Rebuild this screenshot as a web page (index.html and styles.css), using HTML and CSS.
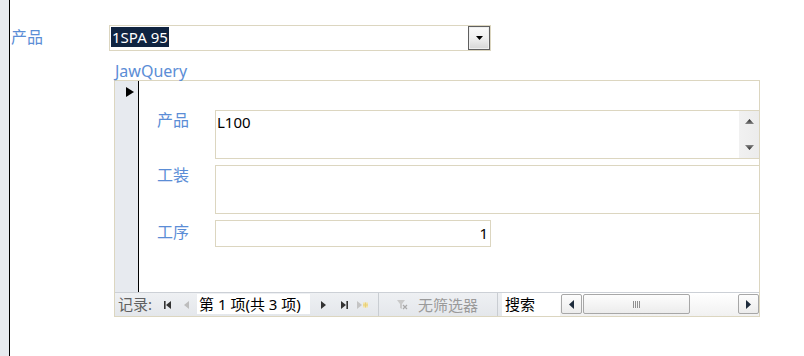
FILE: index.html
```html
<!DOCTYPE html>
<html lang="zh-CN">
<head>
<meta charset="utf-8">
<title>JawQuery</title>
<link rel="stylesheet" href="styles.css">
</head>
<body>
<div class="app">
  <aside class="strip"></aside>
  <main class="form">
    <div class="top-row">
      <span class="lbl">产品</span>
      <div class="combo">
        <span class="sel">1SPA 95</span>
        <span class="drop"><svg width="7" height="4" viewBox="0 0 7 4"><path d="M0 0H7L3.5 4Z" fill="#000"/></svg></span>
      </div>
    </div>
    <div class="caption">JawQuery</div>
    <div class="subform">
      <div class="sub-body">
        <div class="selector"><svg width="8" height="10" viewBox="0 0 8 10"><path d="M0 0L8 5L0 10Z" fill="#000"/></svg></div>
        <div class="detail">
          <div class="field">
            <span class="lbl">产品</span>
            <div class="tb tb1">
              <span class="tb-text">L100</span>
              <span class="vscroll">
                <svg width="9" height="5" viewBox="0 0 9 5"><defs><linearGradient id="ga" x1="0" y1="0" x2="0" y2="1"><stop offset="0" stop-color="#222"/><stop offset="1" stop-color="#888"/></linearGradient></defs><path d="M0 5L4.5 0L9 5Z" fill="url(#ga)"/></svg>
                <svg width="9" height="5" viewBox="0 0 9 5"><defs><linearGradient id="gb" x1="0" y1="0" x2="0" y2="1"><stop offset="0" stop-color="#888"/><stop offset="1" stop-color="#222"/></linearGradient></defs><path d="M0 0L9 0L4.5 5Z" fill="url(#gb)"/></svg>
              </span>
            </div>
          </div>
          <div class="field">
            <span class="lbl">工装</span>
            <div class="tb tb2"></div>
          </div>
          <div class="field">
            <span class="lbl lbl3">工序</span>
            <div class="tb tb3">1</div>
          </div>
        </div>
      </div>
      <div class="navbar">
        <span class="nav-label">记录:</span>
        <span class="nbtn w18"><svg width="7" height="8" viewBox="0 0 7 8"><rect x="0" y="0" width="1.6" height="8" fill="#333"/><path d="M7 0L2 4L7 8Z" fill="#333"/></svg></span>
        <span class="nbtn w21"><svg width="5" height="8" viewBox="0 0 5 8"><path d="M5 0L0 4L5 8Z" fill="#bdbdbd"/></svg></span>
        <span class="recbox">第 1 项(共 3 项)</span>
        <span class="nbtn w26"><svg width="5" height="8" viewBox="0 0 5 8"><path d="M0 0L5 4L0 8Z" fill="#333"/></svg></span>
        <span class="nbtn w16"><svg width="7" height="8" viewBox="0 0 7 8"><path d="M0 0L5 4L0 8Z" fill="#333"/><rect x="5.4" y="0" width="1.6" height="8" fill="#333"/></svg></span>
        <span class="nbtn new"><svg width="11" height="8" viewBox="0 0 11 8"><path d="M0 0L5 4L0 8Z" fill="#c4c4c4"/><rect x="6" y="1.5" width="5" height="5" fill="#f3e4a6"/><path d="M6 4H11M8.5 1.5V6.5" stroke="#e7cf7a" stroke-width="1"/></svg></span>
        <span class="filter">
          <svg width="11" height="10" viewBox="0 0 11 10"><path d="M0 0H8L5 4V9L3 8V4Z" fill="#c9c9c9"/><path d="M6 5L10 9M10 5L6 9" stroke="#a9a9a9" stroke-width="1.2"/></svg>
          <span class="filter-text">无筛选器</span>
        </span>
        <span class="search-wrap"><span class="search">搜索</span></span>
        <span class="hscroll">
          <span class="sbtn"><svg width="5" height="9" viewBox="0 0 5 9"><path d="M5 0L0 4.5L5 9Z" fill="#1e2b3c"/></svg></span>
          <span class="thumb"><svg width="7" height="7" viewBox="0 0 7 7"><path d="M0.5 0V7M2.5 0V7M4.5 0V7M6.5 0V7" stroke="#8f8f8f" stroke-width="1"/></svg></span>
          <span class="track"></span>
          <span class="sbtn"><svg width="5" height="9" viewBox="0 0 5 9"><path d="M0 0L5 4.5L0 9Z" fill="#1e2b3c"/></svg></span>
        </span>
      </div>
    </div>
  </main>
</div>
</body>
</html>
```
FILE: styles.css
```css
* { box-sizing: border-box; }
html, body { margin: 0; padding: 0; }
body {
  font-family: "Noto Sans", "Noto Sans CJK SC", sans-serif;
  font-size: 15px;
  background: #fff;
  color: #000;
}
.app { display: flex; height: 356px; overflow: hidden; }
.strip {
  width: 10px;
  flex: none;
  background: #e7eaef;
  border-right: 1px solid #000;
}
.form { flex: 1; padding-top: 25px; overflow: hidden; }

.lbl { color: #5b8dd6; line-height: 20px; font-size: 16px; }

.top-row { display: flex; align-items: flex-start; }
.top-row .lbl { width: 99px; flex: none; padding-left: 1px; padding-top: 2px; }
.combo {
  width: 382px;
  height: 26px;
  border: 1px solid #dcd6c0;
  display: flex;
  justify-content: space-between;
  align-items: flex-start;
  padding: 1px 0 0 1px;
}
.sel {
  background: #0f2340;
  color: #fff;
  line-height: 20px;
  height: 20px;
  padding: 0 1px 0 1px;
}
.drop {
  width: 22px;
  height: 24px;
  margin-top: -1px;
  border: 1px solid #5f5f5f;
  box-shadow: inset 0 0 0 1px #eeeeee;
  background: linear-gradient(#fbfbfb, #f0f0f0 50%, #d6d6d6);
  display: flex;
  align-items: center;
  justify-content: center;
}

.caption {
  margin: 11px 0 0 105px;
  color: #5b8dd6;
  font-size: 16px;
  line-height: 18px;
  height: 18px;
}

.subform {
  margin-left: 104px;
  width: 646px;
  height: 237px;
  border: 1px solid #dcd6c0;
  display: flex;
  flex-direction: column;
}
.sub-body { flex: 1; display: flex; min-height: 0; }
.selector {
  width: 24px;
  flex: none;
  background: #e7eaef;
  border-right: 1px solid #000;
}
.selector svg { display: block; margin: 6px 0 0 11px; }
.detail {
  flex: 1;
  min-width: 0;
  padding: 29px 0 0 18px;
  overflow: hidden;
  display: flex;
  flex-direction: column;
  gap: 6px;
}
.field { display: flex; align-items: flex-start; }
.field .lbl { width: 58px; flex: none; }
.field .lbl3 { padding-top: 2px; }
.tb {
  flex: none;
  border: 1px solid #dcd6c0;
  background: #fff;
  line-height: 20px;
}
.tb1 { width: 545px; height: 49px; display: flex; }
.tb-text { flex: 1; padding: 1px 0 0 1px; }
.vscroll {
  width: 20px;
  flex: none;
  background: linear-gradient(90deg, #f1f1f1, #ececec);
  display: flex;
  flex-direction: column;
  align-items: center;
  justify-content: space-between;
  padding: 8px 0 8px 0;
}
.vscroll svg { display: block; }
.tb2 { width: 620px; height: 49px; }
.tb3 {
  width: 276px;
  height: 27px;
  text-align: right;
  padding: 2px 2px 0 0;
}

.navbar {
  height: 24px;
  flex: none;
  border-top: 1px solid #ccd0d6;
  background: linear-gradient(#eef0f3, #e4e7eb);
  display: flex;
  align-items: stretch;
  font-size: 15px;
  line-height: 20px;
}
.nav-label {
  width: 43px;
  flex: none;
  padding: 1px 0 0 3px;
  color: #606060;
}
.nbtn {
  flex: none;
  display: flex;
  align-items: center;
  justify-content: center;
}
.nbtn svg { display: block; }
.w16 { width: 16px; }
.w18 { width: 18px; }
.w21 { width: 21px; }
.w26 { width: 26px; }
.nbtn.new { width: 26px; justify-content: flex-start; padding-left: 5px; }
.recbox {
  width: 113px;
  flex: none;
  height: 20px;
  margin-top: 1px;
  background: #fff;
  padding-left: 2px;
  white-space: nowrap;
}
.filter {
  width: 120px;
  flex: none;
  border-left: 1px solid #c9cdd2;
  border-right: 1px solid #c9cdd2;
  display: flex;
  align-items: center;
  padding-left: 18px;
  gap: 10px;
}
.filter svg { display: block; }
.filter-text { color: #9a9a9a; }
.search-wrap { width: 62px; flex: none; padding-left: 4px; }
.search {
  display: block;
  height: 100%;
  background: #fff;
  padding: 1px 0 0 3px;
}
.hscroll {
  width: 199px;
  flex: none;
  display: flex;
  align-items: flex-start;
  padding: 1px 0 0 1px;
  gap: 1px;
  background: linear-gradient(#ffffff, #f1f1f1);
}
.sbtn, .thumb {
  height: 20px;
  border: 1px solid #a7a7a7;
  border-radius: 2px;
  background: linear-gradient(#fdfdfd, #ececec);
  display: flex;
  align-items: center;
  justify-content: center;
}
.sbtn { width: 21px; flex: none; }
.thumb { width: 107px; flex: none; }
.track { flex: 1; }
.sbtn svg, .thumb svg { display: block; }
```
